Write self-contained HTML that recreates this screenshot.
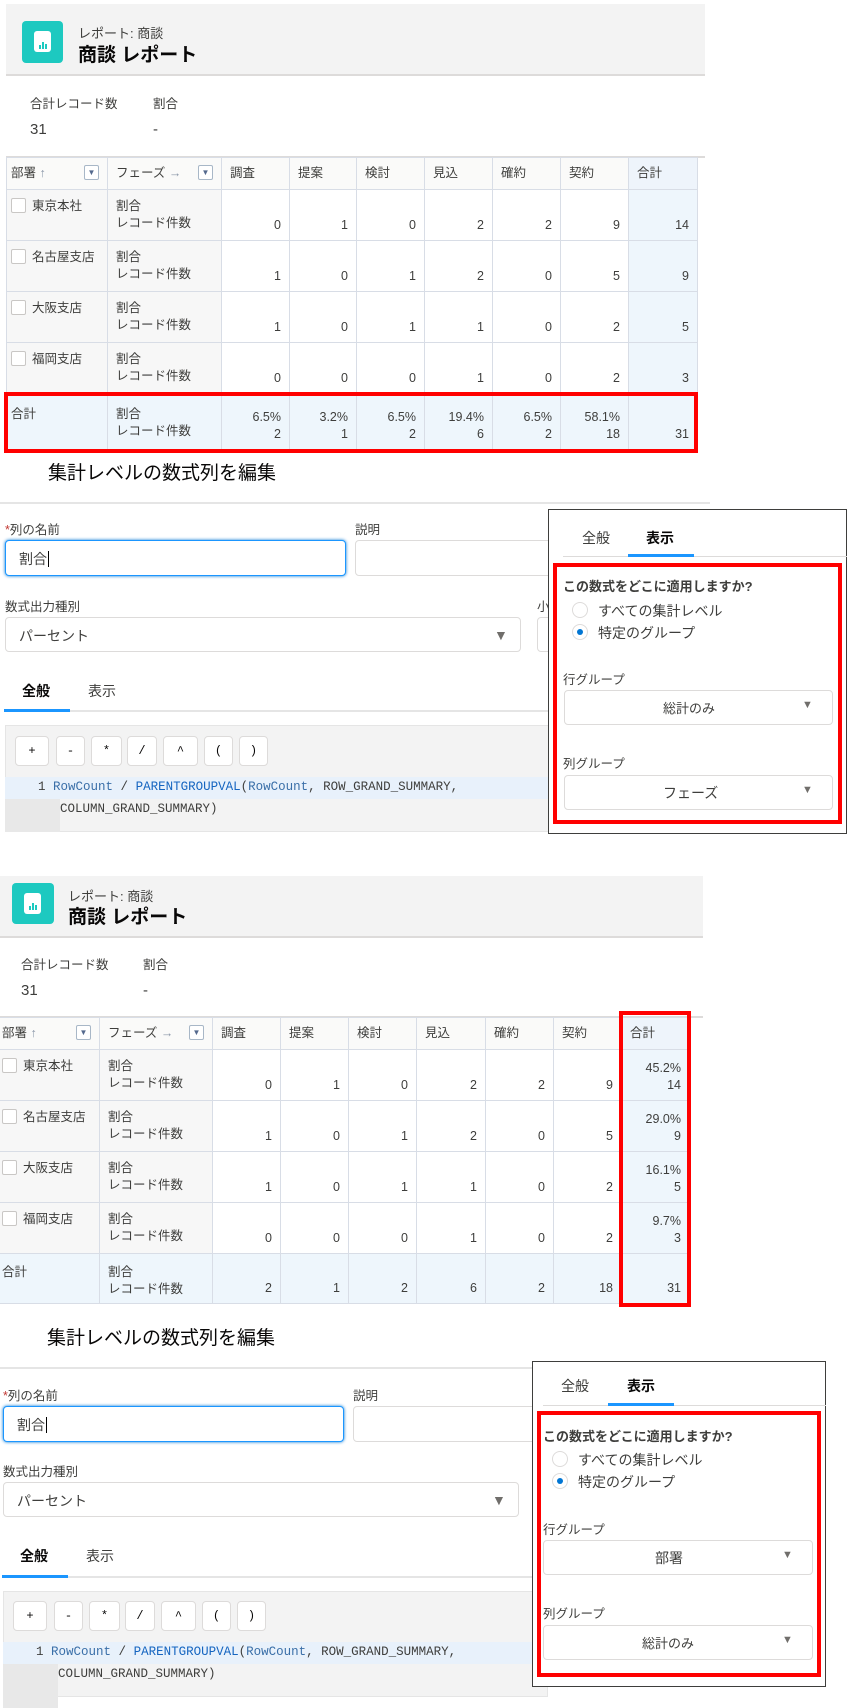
<!DOCTYPE html>
<html><head><meta charset="utf-8"><style>
*{box-sizing:border-box;margin:0;padding:0}
body{width:848px;height:1708px;background:#fff;position:relative;overflow:hidden;font-family:"Liberation Sans","Noto Sans CJK JP",sans-serif;color:#3e3e3c;font-size:13px}
.a{position:absolute}
.hdr{background:#f3f3f3;border-bottom:2px solid #dddbda}
.icon{background:#1dc9c0;border-radius:4px}
.icon:after{content:"";position:absolute;left:12px;top:10px;width:17px;height:21px;background:#fff;border-radius:3px}
.icon i{position:absolute;z-index:2;bottom:14px;width:2px;background:#1dc9c0}
.sub{font-size:13px;color:#3e3e3c}
.ttl{font-size:19px;font-weight:bold;color:#080707}
table{position:absolute;border-collapse:collapse;table-layout:fixed;font-size:12.5px}
td{border:1px solid #d8dde6;vertical-align:top;padding:0 8px;line-height:17px}
tr.h td{background:#fafaf9;vertical-align:middle;padding-top:0;color:#3e3e3c}
td.n{text-align:right;vertical-align:bottom;padding-bottom:6px;padding-right:8px}
td.g{background:#f7f7f7;padding-top:8px}
td.t{background:#eef6fc}
tr.tot td{background:#eef6fc}
.cb{display:inline-block;width:15px;height:15px;border:1px solid #c9c7c5;border-radius:2px;background:#fff;vertical-align:-3px;margin-right:6px}
.dd{display:inline-block;width:15px;height:15px;border:1px solid #a8b7c7;border-radius:2px;background:#fff;float:right;font-size:8px;line-height:13px;text-align:center;color:#54698d}
.red{border:4px solid #f00}
.lbl{font-size:12.5px;color:#3e3e3c}
.inp{border:1px solid #dddbda;border-radius:4px;background:#fff}
.foc{border:1px solid #1b96ff;box-shadow:0 0 3px #0176d3}
.tri{font-size:11px;color:#706e6b}
.btn{border:1px solid #dddbda;border-radius:4px;background:#fff;text-align:center;font-family:"Liberation Mono",monospace;font-size:12px;line-height:28px;color:#080707}
.code{font-family:"Liberation Mono",monospace;font-size:12.5px}
.pop{border:1px solid #3e3e3c;background:#fff}
.radio{width:16px;height:16px;border:1px solid #dddbda;border-radius:50%;background:#fff}
.radio.on:after{content:"";position:absolute;left:4px;top:4px;width:6px;height:6px;border-radius:50%;background:#0176d3}
</style></head><body>

<!-- SECTION 1 -->
<div class="a hdr" style="left:6px;top:4px;width:699px;height:72px"></div>
<div class="a icon" style="left:22px;top:21px;width:41px;height:42px"><i style="left:17px;height:4px"></i><i style="left:20px;height:7px"></i><i style="left:23px;height:5px"></i></div>
<div class="a sub" style="left:78px;top:23px">レポート: 商談</div>
<div class="a ttl" style="left:78px;top:40px">商談 レポート</div>
<div class="a lbl" style="left:30px;top:93px">合計レコード数</div>
<div class="a lbl" style="left:153px;top:93px">割合</div>
<div class="a" style="left:30px;top:121px;font-size:15px">31</div>
<div class="a" style="left:153px;top:121px;font-size:15px">-</div>
<div class="a" style="left:6px;top:156px;width:699px;height:2px;background:#dddbda"></div>
<table style="left:6px;top:157px;width:691px">
<colgroup><col style="width:101px"><col style="width:114px"><col style="width:68px"><col style="width:67px"><col style="width:68px"><col style="width:68px"><col style="width:68px"><col style="width:68px"><col style="width:69px"></colgroup>
<tr class="h" style="height:32px"><td style="padding-left:4px">部署 <span style="color:#8a96a8">↑</span><span class="dd">▼</span></td><td>フェーズ <span style="color:#8a96a8">→</span><span class="dd">▼</span></td><td>調査</td><td>提案</td><td>検討</td><td>見込</td><td>確約</td><td>契約</td><td style="background:#eef4fb">合計</td></tr>
<tr style="height:51px"><td class="g" style="padding-left:4px"><span class="cb"></span>東京本社</td><td class="g">割合<br>レコード件数</td><td class="n">0</td><td class="n">1</td><td class="n">0</td><td class="n">2</td><td class="n">2</td><td class="n">9</td><td class="n t">14</td></tr>
<tr style="height:51px"><td class="g" style="padding-left:4px;white-space:nowrap"><span class="cb"></span>名古屋支店</td><td class="g">割合<br>レコード件数</td><td class="n">1</td><td class="n">0</td><td class="n">1</td><td class="n">2</td><td class="n">0</td><td class="n">5</td><td class="n t">9</td></tr>
<tr style="height:51px"><td class="g" style="padding-left:4px"><span class="cb"></span>大阪支店</td><td class="g">割合<br>レコード件数</td><td class="n">1</td><td class="n">0</td><td class="n">1</td><td class="n">1</td><td class="n">0</td><td class="n">2</td><td class="n t">5</td></tr>
<tr style="height:51px"><td class="g" style="padding-left:4px"><span class="cb"></span>福岡支店</td><td class="g">割合<br>レコード件数</td><td class="n">0</td><td class="n">0</td><td class="n">0</td><td class="n">1</td><td class="n">0</td><td class="n">2</td><td class="n t">3</td></tr>
<tr class="tot" style="height:56px"><td style="padding-top:12px;padding-left:4px">合計</td><td style="padding-top:12px">割合<br>レコード件数</td><td class="n">6.5%<br>2</td><td class="n">3.2%<br>1</td><td class="n">6.5%<br>2</td><td class="n">19.4%<br>6</td><td class="n">6.5%<br>2</td><td class="n">58.1%<br>18</td><td class="n">31</td></tr>
</table>
<div class="a red" style="left:4px;top:392px;width:694px;height:61px"></div>

<div class="a" style="left:48px;top:458px;font-size:19px;color:#080707">集計レベルの数式列を編集</div>
<div class="a" style="left:0;top:502px;width:710px;height:2px;background:#e5e5e5"></div>
<div class="a lbl" style="left:5px;top:519px"><span style="color:#c23934">*</span>列の名前</div>
<div class="a inp foc" style="left:5px;top:540px;width:341px;height:36px"></div>
<div class="a" style="left:19px;top:549px;font-size:14px">割合<span style="border-left:1px solid #000;margin-left:1px"></span></div>
<div class="a lbl" style="left:355px;top:519px">説明</div>
<div class="a inp" style="left:355px;top:540px;width:200px;height:36px"></div>
<div class="a lbl" style="left:5px;top:596px">数式出力種別</div>
<div class="a inp" style="left:5px;top:617px;width:516px;height:35px"></div>
<div class="a" style="left:19px;top:626px;font-size:14px">パーセント</div>
<div class="a tri" style="left:494px;top:627px;font-size:14px">▼</div>
<div class="a lbl" style="left:537px;top:596px">小</div>
<div class="a inp" style="left:537px;top:617px;width:20px;height:35px"></div>
<div class="a" style="left:22px;top:681px;font-size:14px;font-weight:bold;color:#080707">全般</div>
<div class="a" style="left:88px;top:681px;font-size:14px">表示</div>
<div class="a" style="left:4px;top:710px;width:560px;height:2px;background:#e5e5e5"></div>
<div class="a" style="left:4px;top:709px;width:66px;height:3px;background:#1b96ff"></div>
<div class="a" style="left:5px;top:725px;width:560px;height:107px;background:#f3f3f3;border:1px solid #e5e5e5"></div>
<div class="a" style="left:5px;top:777px;width:55px;height:55px;background:#e8e8e8"></div>
<div class="a" style="left:5px;top:777px;width:560px;height:22px;background:#e8f1fb"></div>
<div class="a btn" style="left:15px;top:736px;width:34px;height:30px">+</div>
<div class="a btn" style="left:56px;top:736px;width:29px;height:30px">-</div>
<div class="a btn" style="left:91px;top:736px;width:31px;height:30px">*</div>
<div class="a btn" style="left:127px;top:736px;width:30px;height:30px">/</div>
<div class="a btn" style="left:163px;top:736px;width:35px;height:30px">^</div>
<div class="a btn" style="left:204px;top:736px;width:29px;height:30px">(</div>
<div class="a btn" style="left:239px;top:736px;width:29px;height:30px">)</div>
<div class="a code" style="left:38px;top:780px"><span>1</span> <span style="color:#3a6fa8">RowCount</span> / <span style="color:#1565c0">PARENTGROUPVAL</span>(<span style="color:#3a6fa8">RowCount</span>, ROW_GRAND_SUMMARY,</div>
<div class="a code" style="left:60px;top:802px">COLUMN_GRAND_SUMMARY)</div>

<div class="a pop" style="left:548px;top:509px;width:299px;height:325px"></div>
<div class="a" style="left:582px;top:528px;font-size:14px">全般</div>
<div class="a" style="left:646px;top:528px;font-size:14px;font-weight:bold;color:#080707">表示</div>
<div class="a" style="left:563px;top:556px;width:284px;height:1px;background:#dddbda"></div>
<div class="a" style="left:628px;top:554px;width:66px;height:3px;background:#1b96ff"></div>
<div class="a red" style="left:553px;top:563px;width:289px;height:261px"></div>
<div class="a" style="left:563px;top:576px;font-size:13px;font-weight:bold;color:#3e3e3c">この数式をどこに適用しますか?</div>
<div class="a radio" style="left:572px;top:602px"></div>
<div class="a" style="left:598px;top:601px;font-size:14px">すべての集計レベル</div>
<div class="a radio on" style="left:572px;top:624px"></div>
<div class="a" style="left:598px;top:623px;font-size:14px">特定のグループ</div>
<div class="a lbl" style="left:563px;top:669px">行グループ</div>
<div class="a inp" style="left:564px;top:690px;width:269px;height:35px"></div>
<div class="a" style="left:663px;top:698px;font-size:13px">総計のみ</div>
<div class="a tri" style="left:802px;top:699px">▼</div>
<div class="a lbl" style="left:563px;top:753px">列グループ</div>
<div class="a inp" style="left:564px;top:775px;width:269px;height:35px"></div>
<div class="a" style="left:663px;top:783px;font-size:14px">フェーズ</div>
<div class="a tri" style="left:802px;top:784px">▼</div>

<!-- SECTION 2 -->
<div class="a hdr" style="left:0;top:876px;width:703px;height:62px"></div>
<div class="a icon" style="left:12px;top:883px;width:42px;height:41px"><i style="left:17px;height:4px"></i><i style="left:20px;height:7px"></i><i style="left:23px;height:5px"></i></div>
<div class="a sub" style="left:68px;top:886px">レポート: 商談</div>
<div class="a ttl" style="left:68px;top:902px">商談 レポート</div>
<div class="a lbl" style="left:21px;top:954px">合計レコード数</div>
<div class="a lbl" style="left:143px;top:954px">割合</div>
<div class="a" style="left:21px;top:982px;font-size:15px">31</div>
<div class="a" style="left:143px;top:982px;font-size:15px">-</div>
<div class="a" style="left:0;top:1016px;width:703px;height:2px;background:#dddbda"></div>
<table style="left:-1px;top:1017px;width:690px">
<colgroup><col style="width:100px"><col style="width:113px"><col style="width:68px"><col style="width:68px"><col style="width:68px"><col style="width:69px"><col style="width:68px"><col style="width:68px"><col style="width:68px"></colgroup>
<tr class="h" style="height:32px"><td style="padding-left:2px">部署 <span style="color:#8a96a8">↑</span><span class="dd">▼</span></td><td>フェーズ <span style="color:#8a96a8">→</span><span class="dd">▼</span></td><td>調査</td><td>提案</td><td>検討</td><td>見込</td><td>確約</td><td>契約</td><td style="background:#eef4fb">合計</td></tr>
<tr style="height:51px"><td class="g" style="padding-left:2px"><span class="cb"></span>東京本社</td><td class="g">割合<br>レコード件数</td><td class="n">0</td><td class="n">1</td><td class="n">0</td><td class="n">2</td><td class="n">2</td><td class="n">9</td><td class="n t">45.2%<br>14</td></tr>
<tr style="height:51px"><td class="g" style="padding-left:2px;white-space:nowrap"><span class="cb"></span>名古屋支店</td><td class="g">割合<br>レコード件数</td><td class="n">1</td><td class="n">0</td><td class="n">1</td><td class="n">2</td><td class="n">0</td><td class="n">5</td><td class="n t">29.0%<br>9</td></tr>
<tr style="height:51px"><td class="g" style="padding-left:2px"><span class="cb"></span>大阪支店</td><td class="g">割合<br>レコード件数</td><td class="n">1</td><td class="n">0</td><td class="n">1</td><td class="n">1</td><td class="n">0</td><td class="n">2</td><td class="n t">16.1%<br>5</td></tr>
<tr style="height:51px"><td class="g" style="padding-left:2px"><span class="cb"></span>福岡支店</td><td class="g">割合<br>レコード件数</td><td class="n">0</td><td class="n">0</td><td class="n">0</td><td class="n">1</td><td class="n">0</td><td class="n">2</td><td class="n t">9.7%<br>3</td></tr>
<tr class="tot" style="height:50px"><td style="padding-top:10px;padding-left:2px">合計</td><td style="padding-top:10px">割合<br>レコード件数</td><td class="n">2</td><td class="n">1</td><td class="n">2</td><td class="n">6</td><td class="n">2</td><td class="n">18</td><td class="n">31</td></tr>
</table>
<div class="a red" style="left:619px;top:1011px;width:72px;height:296px"></div>

<div class="a" style="left:47px;top:1323px;font-size:19px;color:#080707">集計レベルの数式列を編集</div>
<div class="a" style="left:0;top:1367px;width:705px;height:2px;background:#e5e5e5"></div>
<div class="a lbl" style="left:3px;top:1385px"><span style="color:#c23934">*</span>列の名前</div>
<div class="a inp foc" style="left:3px;top:1406px;width:341px;height:36px"></div>
<div class="a" style="left:17px;top:1415px;font-size:14px">割合<span style="border-left:1px solid #000;margin-left:1px"></span></div>
<div class="a lbl" style="left:353px;top:1385px">説明</div>
<div class="a inp" style="left:353px;top:1406px;width:190px;height:36px"></div>
<div class="a lbl" style="left:3px;top:1461px">数式出力種別</div>
<div class="a inp" style="left:3px;top:1482px;width:516px;height:35px"></div>
<div class="a" style="left:17px;top:1491px;font-size:14px">パーセント</div>
<div class="a tri" style="left:492px;top:1492px;font-size:14px">▼</div>
<div class="a" style="left:20px;top:1546px;font-size:14px;font-weight:bold;color:#080707">全般</div>
<div class="a" style="left:86px;top:1546px;font-size:14px">表示</div>
<div class="a" style="left:2px;top:1576px;width:540px;height:2px;background:#e5e5e5"></div>
<div class="a" style="left:2px;top:1575px;width:66px;height:3px;background:#1b96ff"></div>
<div class="a" style="left:3px;top:1591px;width:545px;height:106px;background:#f3f3f3;border:1px solid #e5e5e5"></div>
<div class="a" style="left:3px;top:1642px;width:55px;height:66px;background:#e8e8e8"></div>
<div class="a" style="left:3px;top:1642px;width:545px;height:22px;background:#e8f1fb"></div>
<div class="a btn" style="left:13px;top:1601px;width:34px;height:30px">+</div>
<div class="a btn" style="left:54px;top:1601px;width:29px;height:30px">-</div>
<div class="a btn" style="left:89px;top:1601px;width:31px;height:30px">*</div>
<div class="a btn" style="left:125px;top:1601px;width:30px;height:30px">/</div>
<div class="a btn" style="left:161px;top:1601px;width:35px;height:30px">^</div>
<div class="a btn" style="left:202px;top:1601px;width:29px;height:30px">(</div>
<div class="a btn" style="left:237px;top:1601px;width:29px;height:30px">)</div>
<div class="a code" style="left:36px;top:1645px"><span>1</span> <span style="color:#3a6fa8">RowCount</span> / <span style="color:#1565c0">PARENTGROUPVAL</span>(<span style="color:#3a6fa8">RowCount</span>, ROW_GRAND_SUMMARY,</div>
<div class="a code" style="left:58px;top:1667px">COLUMN_GRAND_SUMMARY)</div>

<div class="a pop" style="left:532px;top:1361px;width:294px;height:326px"></div>
<div class="a" style="left:561px;top:1376px;font-size:14px">全般</div>
<div class="a" style="left:627px;top:1376px;font-size:14px;font-weight:bold;color:#080707">表示</div>
<div class="a" style="left:543px;top:1405px;width:283px;height:1px;background:#dddbda"></div>
<div class="a" style="left:608px;top:1403px;width:66px;height:3px;background:#1b96ff"></div>
<div class="a red" style="left:537px;top:1411px;width:284px;height:266px"></div>
<div class="a" style="left:543px;top:1426px;font-size:13px;font-weight:bold;color:#3e3e3c">この数式をどこに適用しますか?</div>
<div class="a radio" style="left:552px;top:1451px"></div>
<div class="a" style="left:578px;top:1450px;font-size:14px">すべての集計レベル</div>
<div class="a radio on" style="left:552px;top:1473px"></div>
<div class="a" style="left:578px;top:1472px;font-size:14px">特定のグループ</div>
<div class="a lbl" style="left:543px;top:1519px">行グループ</div>
<div class="a inp" style="left:543px;top:1540px;width:270px;height:35px"></div>
<div class="a" style="left:655px;top:1548px;font-size:14px">部署</div>
<div class="a tri" style="left:782px;top:1549px">▼</div>
<div class="a lbl" style="left:543px;top:1603px">列グループ</div>
<div class="a inp" style="left:543px;top:1625px;width:270px;height:35px"></div>
<div class="a" style="left:642px;top:1633px;font-size:13px">総計のみ</div>
<div class="a tri" style="left:782px;top:1634px">▼</div>
</body></html>
